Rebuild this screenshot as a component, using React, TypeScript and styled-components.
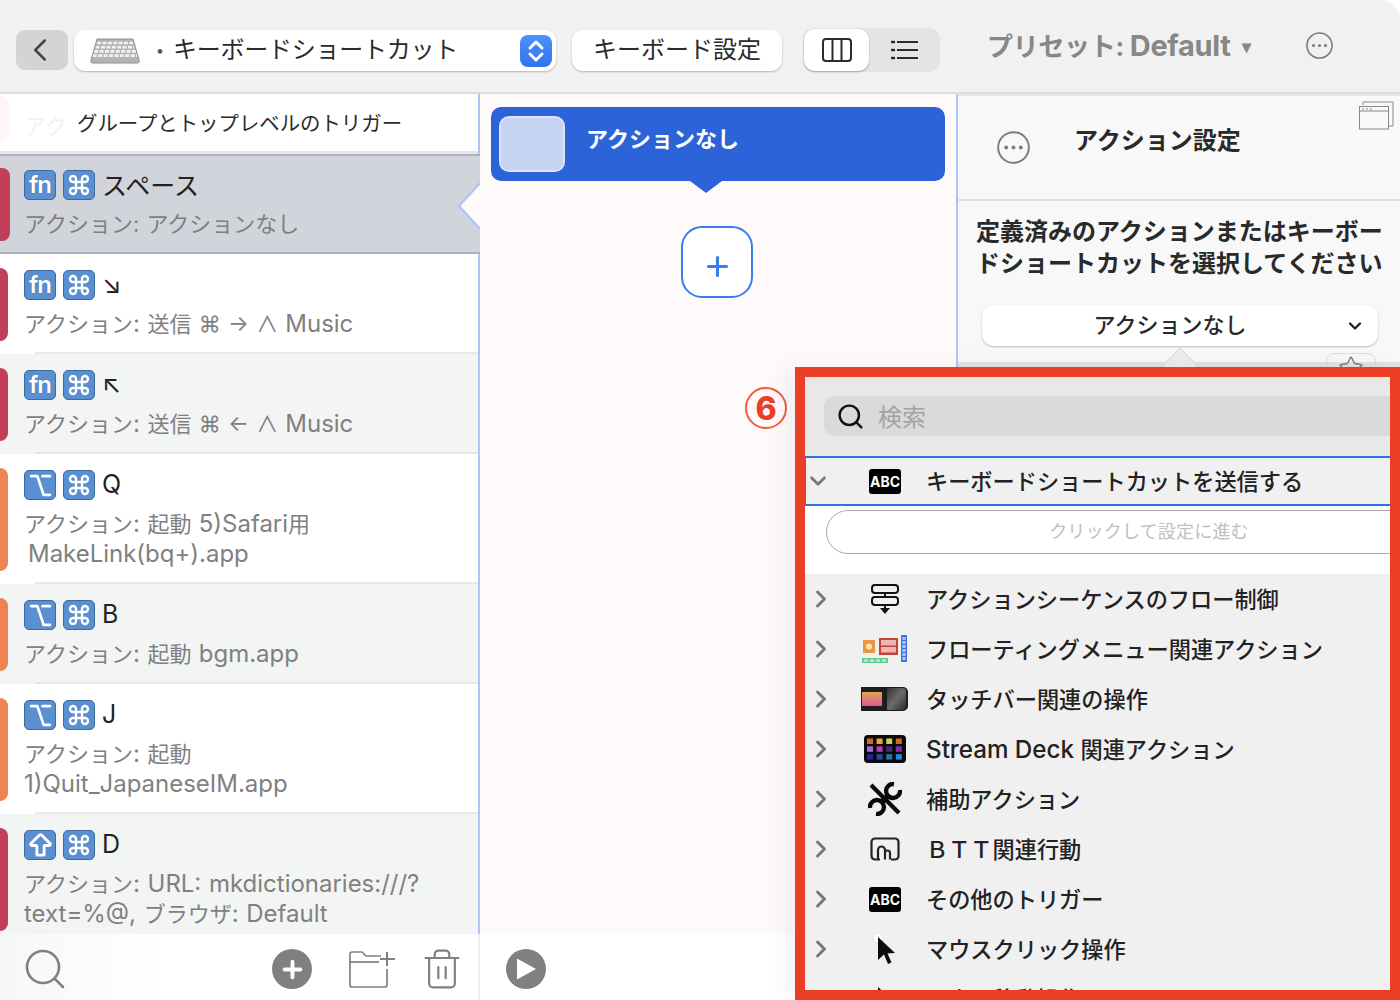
import {FC, ReactNode} from "react";
import styled, {createGlobalStyle} from "styled-components";
import {ArrowBigUp, ChevronDown, ChevronLeft, ChevronRight, Command, Option, Plus, Search, Star, Trash2} from "lucide-react";

const GlobalStyle = createGlobalStyle`
  html, body {
    margin: 0;
    padding: 0;
    background: #fff;
  }

  body {
    font-family: Inter, "Noto Sans CJK JP", sans-serif;
    color: #222;
  }
`;

interface TriggerEntity {
    stripe: string;
    keys: string[];
    label: ReactNode;
    lines: string[];
    indent?: boolean;
}

const RED = '#c13f58';
const ORANGE = '#ee8452';

const triggers: TriggerEntity[] = [
    {stripe: RED, keys: ['fn', 'cmd'], label: '↘', lines: ['アクション: 送信 ⌘ → ∧ Music']},
    {stripe: RED, keys: ['fn', 'cmd'], label: '↖', lines: ['アクション: 送信 ⌘ ← ∧ Music']},
    {stripe: ORANGE, keys: ['opt', 'cmd'], label: 'Q', lines: ['アクション: 起動 5)Safari用', 'MakeLink(bq+).app'], indent: true},
    {stripe: ORANGE, keys: ['opt', 'cmd'], label: 'B', lines: ['アクション: 起動 bgm.app']},
    {stripe: ORANGE, keys: ['opt', 'cmd'], label: 'J', lines: ['アクション: 起動', '1)Quit_JapaneseIM.app']},
    {stripe: RED, keys: ['shift', 'cmd'], label: 'D', lines: ['アクション: URL: mkdictionaries:///?', 'text=%@, ブラウザ: Default']},
];

const Latin = styled.span`
  font-size: 1.09em;
`;

// The system font of the original draws latin letters larger than its kana
const mixed = (text: string) => text.split(/([\x21-\x7e][\x20-\x7e]*)/).map((part, i) => (
    i % 2 === 1 ? <Latin key={i}>{part}</Latin> : part
));

const KeyBadge: FC<{name: string}> = ({name}) => {
    if (name === 'fn') {
        return <Key><FnText>fn</FnText></Key>;
    }
    if (name === 'opt') {
        return <Key><Option size={25} strokeWidth={2.6} color="#fff" /></Key>;
    }
    if (name === 'shift') {
        return <Key><ArrowBigUp size={29} strokeWidth={2.4} color="#fff" /></Key>;
    }
    return <Key><Command size={24} strokeWidth={2.4} color="#fff" /></Key>;
};

const TriggerRow: FC<{item: TriggerEntity; index: number}> = ({item, index}) => (
    <Row $alt={index % 2 === 1}>
        <Stripe $color={item.stripe} />
        <RowBody>
            <KeyLine>
                {item.keys.map((k, i) => <KeyBadge key={i} name={k} />)}
                <KeyLabel>{item.label}</KeyLabel>
            </KeyLine>
            {item.lines.map((line, i) => (
                <SubLine key={i} $first={i === 0} $indent={!!item.indent && i === 1}>{mixed(line)}</SubLine>
            ))}
        </RowBody>
    </Row>
);

const DotsCircle: FC<{size: number}> = ({size}) => (
    <svg width={size} height={size} viewBox="0 0 34 34">
        <circle cx="17" cy="17" r="15.8" fill="none" stroke="#7c7c7c" strokeWidth="2" />
        <circle cx="9.5" cy="17" r="2" fill="#7c7c7c" />
        <circle cx="17" cy="17" r="2" fill="#7c7c7c" />
        <circle cx="24.5" cy="17" r="2" fill="#7c7c7c" />
    </svg>
);

const KeyboardIcon = () => (
    <svg width="50" height="26" viewBox="0 0 50 26">
        <path d="M7 1H43L49 22a2 2 0 0 1-2 3H3a2 2 0 0 1-2-3Z" fill="#b5b5b5" stroke="#8e8e8e" />
        {[0, 1, 2, 3].map(r => (
            <path key={r} d={`M${7 - r * 1.4} ${5 + r * 4.2}H${43 + r * 1.4}`} stroke="#f1f1f1" strokeWidth="2.6" strokeDasharray="4 1.4" />
        ))}
    </svg>
);

const StepperIcon = () => (
    <svg width="18" height="24" viewBox="0 0 18 24" fill="none" stroke="#fff" strokeWidth="3" strokeLinecap="round" strokeLinejoin="round">
        <path d="M3 9l6-6 6 6" />
        <path d="M3 15l6 6 6-6" />
    </svg>
);

const ColumnsIcon = () => (
    <svg width="30" height="24" viewBox="0 0 30 24" fill="none" stroke="#2b2b2b" strokeWidth="2">
        <rect x="1" y="1" width="28" height="22" rx="3" />
        <path d="M10.5 1v22M19.5 1v22" />
    </svg>
);

const ListIcon = () => (
    <svg width="28" height="22" viewBox="0 0 28 22" fill="none" stroke="#2b2b2b" strokeWidth="2">
        <path d="M6 3h21M6 11h21M6 19h21" />
        <path d="M1 3h2M1 11h2M1 19h2" strokeWidth="2.6" strokeLinecap="round" />
    </svg>
);

const WindowsIcon = () => (
    <svg width="35" height="29" viewBox="0 0 35 29" fill="none" stroke="#888" strokeWidth="1">
        <path d="M4 4V1h30v24h-4" />
        <rect x="0.5" y="5.5" width="29" height="22.5" fill="#f8f8f8" />
        <path d="M0.5 10h29" />
        <path d="M3 8h2M7 8h2M11 8h2" />
    </svg>
);

const FlowIcon = () => (
    <svg width="30" height="32" viewBox="0 0 30 32" fill="none" stroke="#111" strokeWidth="2">
        <rect x="2" y="2" width="26" height="8" rx="3" />
        <rect x="2" y="14" width="26" height="8" rx="3" />
        <path d="M15 10v4M15 22v3" />
        <path d="M10 25h10l-5 6Z" fill="#111" stroke="none" />
    </svg>
);

const FloatingIcon = () => (
    <svg width="48" height="32" viewBox="0 0 48 32">
        <rect x="2" y="7" width="12" height="13" fill="#f0953f" />
        <circle cx="8" cy="13.5" r="3" fill="#fbe3c8" />
        <rect x="18" y="5" width="19" height="17" fill="#c5413c" />
        <rect x="20" y="7" width="15" height="5.5" fill="#e9b7b4" />
        <rect x="20" y="14" width="15" height="5.5" fill="#e9b7b4" />
        <rect x="40" y="2" width="6" height="27" rx="1" fill="#3f6fdc" />
        <path d="M43 4v23" stroke="#a9c4f2" strokeWidth="3.4" strokeDasharray="3 1" />
        <rect x="1" y="25" width="26" height="5" fill="#62cf90" />
        <path d="M3 27.5h22" stroke="#cdeeda" strokeWidth="2" strokeDasharray="4 2" />
    </svg>
);

const TouchBarIcon = () => (
    <svg width="48" height="26" viewBox="0 0 48 26">
        <defs>
            <linearGradient id="tbFill" x1="0" y1="0" x2="0" y2="1">
                <stop offset="0" stopColor="#e2a54a" />
                <stop offset="1" stopColor="#dc5aa0" />
            </linearGradient>
            <linearGradient id="tbKey" x1="0" y1="0" x2="1" y2="1">
                <stop offset="0" stopColor="#333" />
                <stop offset="0.5" stopColor="#6c6c6c" />
                <stop offset="1" stopColor="#2a2a2a" />
            </linearGradient>
        </defs>
        <path d="M0 1H42a5 5 0 0 1 5 5V20a5 5 0 0 1-5 5H0Z" fill="#1d1d1d" />
        <rect x="1" y="6" width="20" height="14" fill="url(#tbFill)" />
        <path d="M26 2H41a4 4 0 0 1 4 4V20a4 4 0 0 1-4 4H26Z" fill="url(#tbKey)" />
    </svg>
);

const deckColors = ['#d7662a', '#e0a838', '#c9d24a', '#d06a28', '#a868d8', '#b83cb0', '#4a2a78', '#8a28a8', '#2a1fa8', '#2848a8', '#2f6ea8', '#2f80e8'];

const StreamDeckIcon = () => (
    <svg width="42" height="28" viewBox="0 0 42 28">
        <rect width="42" height="28" rx="4" fill="#0a0a0a" />
        {deckColors.map((c, i) => (
            <rect key={i} x={3 + (i % 4) * 9.6} y={3.5 + Math.floor(i / 4) * 7.8} width="6" height="5.5" fill={c} />
        ))}
    </svg>
);

const ToolsIcon = () => (
    <svg width="34" height="34" viewBox="0 0 34 34" fill="none" stroke="#0a0a0a">
        <path d="M3 3L31 31" strokeWidth="4.2" />
        <path d="M20 14L14 20" strokeWidth="5.5" />
        <path d="M26 2A7 7 0 1 0 32 8" strokeWidth="4.4" />
        <path d="M8 32A7 7 0 1 0 2 26" strokeWidth="4.4" />
    </svg>
);

const BttIcon = () => (
    <svg width="30" height="24" viewBox="0 0 30 24" fill="none" stroke="#222" strokeWidth="2.2">
        <path d="M10 22.5H5a3.5 3.5 0 0 1-3.5-3.5V5A3.5 3.5 0 0 1 5 1.5H25A3.5 3.5 0 0 1 28.5 5V19a3.5 3.5 0 0 1-3.5 3.5H21" />
        <path d="M8 22.5V13a3.5 3.5 0 0 1 7 0v9.5M15 16a2.5 2.5 0 0 1 5 0v6.5" />
    </svg>
);

const CursorIcon: FC<{dot?: boolean}> = ({dot}) => (
    <svg width="26" height="32" viewBox="0 0 26 32">
        {dot && <circle cx="6" cy="5" r="5" fill="#fff" stroke="#ccc" strokeWidth="0.5" />}
        <path d="M6 4L23 20l-7.5 .5 4 9-3.5 1.5-4-9.5L6 27Z" fill="#0c0c0c" />
    </svg>
);

const AbcBadge = styled.div`
  width: 32px;
  height: 25px;
  display: flex;
  align-items: center;
  justify-content: center;
  border-radius: 3px;
  background: #000;
  font-size: 14px;
  font-weight: 700;
  color: #fff;
`;

const actions: {icon: ReactNode; title: string}[] = [
    {icon: <FlowIcon />, title: 'アクションシーケンスのフロー制御'},
    {icon: <FloatingIcon />, title: 'フローティングメニュー関連アクション'},
    {icon: <TouchBarIcon />, title: 'タッチバー関連の操作'},
    {icon: <StreamDeckIcon />, title: 'Stream Deck 関連アクション'},
    {icon: <ToolsIcon />, title: '補助アクション'},
    {icon: <BttIcon />, title: 'ＢＴＴ関連行動'},
    {icon: <AbcBadge>ABC</AbcBadge>, title: 'その他のトリガー'},
    {icon: <CursorIcon dot />, title: 'マウスクリック操作'},
    {icon: <CursorIcon />, title: 'マウス移動操作'},
];

export default function App() {
    return (
        <Shell>
            <GlobalStyle />
            <Toolbar>
                <BackButton><ChevronLeft size={38} strokeWidth={1.6} color="#444" /></BackButton>
                <GroupSelect>
                    <KeyboardIcon />
                    <GroupDot>・</GroupDot>
                    <GroupTitle>キーボードショートカット</GroupTitle>
                    <Stepper><StepperIcon /></Stepper>
                </GroupSelect>
                <ToolButton>キーボード設定</ToolButton>
                <Segmented>
                    <Segment $active><ColumnsIcon /></Segment>
                    <Segment><ListIcon /></Segment>
                </Segmented>
                <Preset>プリセット: <PresetName>Default</PresetName><PresetArrow>▾</PresetArrow></Preset>
                <PresetMenu><DotsCircle size={27} /></PresetMenu>
            </Toolbar>
            <Main>
                <LeftColumn>
                    <TriggerList>
                        <ListHeader>
                            <Ghost>アク</Ghost>
                            <HeaderTitle>グループとトップレベルのトリガー</HeaderTitle>
                        </ListHeader>
                        <SelectedRow>
                            <Stripe $color={RED} $wide />
                            <RowBody>
                                <KeyLine>
                                    <KeyBadge name="fn" />
                                    <KeyBadge name="cmd" />
                                    <KeyLabel>スペース</KeyLabel>
                                </KeyLine>
                                <SubLine $first>アクション: アクションなし</SubLine>
                            </RowBody>
                            <Notch width="24" height="50" viewBox="0 0 24 50">
                                <path d="M24 2L3 25l21 23Z" fill="#fefaf9" />
                                <path d="M24 2L3 25l21 23" fill="none" stroke="#adc6f5" strokeWidth="2.5" />
                            </Notch>
                        </SelectedRow>
                        {triggers.map((item, i) => <TriggerRow key={i} item={item} index={i} />)}
                    </TriggerList>
                    <BottomBar>
                        <Search size={48} strokeWidth={1.3} color="#808080" />
                        <BottomTools>
                            <RoundAction><Plus size={27} strokeWidth={3.4} color="#fff" /></RoundAction>
                            <FolderAdd width="47" height="40" viewBox="0 0 47 40" fill="none" stroke="#808080" strokeWidth="1.7">
                                <path d="M38 20V36a2 2 0 0 1-2 2H3a2 2 0 0 1-2-2V5a2 2 0 0 1 2-2H13l4 4H32" />
                                <path d="M1 13H30" />
                                <path d="M38 3V17M31 10H46" strokeWidth="2" />
                            </FolderAdd>
                            <Trash2 size={44} strokeWidth={1.2} color="#808080" />
                        </BottomTools>
                    </BottomBar>
                </LeftColumn>
                <MiddleColumn>
                    <SequencePane>
                        <ActionCard>
                            <Swatch />
                            <ActionCardTitle>アクションなし</ActionCardTitle>
                        </ActionCard>
                        <AddAction><Plus size={31} strokeWidth={2.4} color="#3a7bf0" /></AddAction>
                    </SequencePane>
                    <PlayBar>
                        <RoundAction>
                            <svg width="22" height="24" viewBox="0 0 22 24"><path d="M2 1.5L21 12 2 22.5Z" fill="#fff" /></svg>
                        </RoundAction>
                    </PlayBar>
                </MiddleColumn>
                <RightColumn>
                    <SettingsHeader>
                        <DotsCircle size={33} />
                        <SettingsTitle>アクション設定</SettingsTitle>
                        <WindowsSlot><WindowsIcon /></WindowsSlot>
                    </SettingsHeader>
                    <SettingsBody>
                        <Prompt>定義済みのアクションまたはキーボー<br />ドショートカットを選択してください</Prompt>
                        <ActionDropdown>
                            <span>アクションなし</span>
                            <DropdownChevron><ChevronDown size={20} strokeWidth={2.8} color="#222" /></DropdownChevron>
                        </ActionDropdown>
                        <PopoverEdge>
                            <PopoverTip width="38" height="21" viewBox="0 0 38 21">
                                <path d="M0 21L19 1l19 20Z" fill="#ededeb" stroke="#d2d2d0" />
                            </PopoverTip>
                            <StarBox><Star size={26} strokeWidth={1.3} color="#777" /></StarBox>
                        </PopoverEdge>
                    </SettingsBody>
                </RightColumn>
            </Main>
            <PickerFrame>
                <StepMark>6</StepMark>
                <Picker>
                    <SearchArea>
                        <SearchField>
                            <Search size={29} strokeWidth={2} color="#111" />
                            <SearchHint>検索</SearchHint>
                        </SearchField>
                    </SearchArea>
                    <OpenRow>
                        <RowChevron $open><ChevronDown size={26} strokeWidth={2.5} color="#777" /></RowChevron>
                        <RowIcon><AbcBadge>ABC</AbcBadge></RowIcon>
                        <RowTitle>キーボードショートカットを送信する</RowTitle>
                    </OpenRow>
                    <OpenDetail>
                        <ShortcutField>クリックして設定に進む</ShortcutField>
                    </OpenDetail>
                    {actions.map((a, i) => (
                        <ActionRow key={i}>
                            <RowChevron><ChevronRight size={28} strokeWidth={2.5} color="#777" /></RowChevron>
                            <RowIcon>{a.icon}</RowIcon>
                            <RowTitle>{mixed(a.title)}</RowTitle>
                        </ActionRow>
                    ))}
                </Picker>
            </PickerFrame>
        </Shell>
    );
}

const Shell = styled.div`
  position: relative;
  width: 1400px;
  height: 1000px;
  overflow: hidden;
  display: flex;
  flex-direction: column;
  background: #fff;
`;

const Toolbar = styled.div`
  box-sizing: border-box;
  height: 94px;
  flex: none;
  display: flex;
  align-items: flex-start;
  padding: 30px 0 0 16px;
  background: #f0f1f0;
  border-bottom: 2px solid #dcdcdc;
  border-top-right-radius: 20px;
`;

const BackButton = styled.div`
  box-sizing: border-box;
  width: 52px;
  height: 40px;
  flex: none;
  display: flex;
  align-items: center;
  justify-content: center;
  padding-right: 4px;
  margin-right: 6px;
  border-radius: 9px;
  background: #d4d5d3;
`;

const GroupSelect = styled.div`
  box-sizing: border-box;
  width: 482px;
  height: 41px;
  flex: none;
  display: flex;
  align-items: center;
  padding: 0 4px 0 16px;
  margin-right: 16px;
  border-radius: 11px;
  background: #fff;
  box-shadow: 0 1px 2px rgba(0, 0, 0, .25);
`;

const GroupDot = styled.span`
  width: 24px;
  margin: -4px 0 0 9px;
  font-size: 22px;
  color: #555;
`;

const GroupTitle = styled.span`
  flex: 1;
  margin-top: -7px;
  font-size: 24px;
  letter-spacing: -.25px;
  white-space: nowrap;
  color: #2a2a2a;
`;

const Stepper = styled.div`
  width: 32px;
  height: 32px;
  flex: none;
  display: flex;
  align-items: center;
  justify-content: center;
  border-radius: 8px;
  background: linear-gradient(#4b90fb, #2f74ee);
`;

const ToolButton = styled.div`
  box-sizing: border-box;
  width: 210px;
  height: 41px;
  flex: none;
  margin-right: 21px;
  padding-bottom: 6px;
  display: flex;
  align-items: center;
  justify-content: center;
  font-size: 24px;
  color: #2a2a2a;
  border-radius: 11px;
  background: #fff;
  box-shadow: 0 1px 2px rgba(0, 0, 0, .25);
`;

const Segmented = styled.div`
  width: 137px;
  height: 44px;
  flex: none;
  display: flex;
  margin: -2px 47px 0 0;
  border-radius: 11px;
  background: #e3e4e3;
`;

const Segment = styled.div<{$active?: boolean}>`
  flex: ${p => p.$active ? '0 0 65px' : '1'};
  display: flex;
  align-items: center;
  justify-content: center;
  border-radius: 11px;
  margin: 1px 0 1px 1px;
  background: ${p => p.$active ? '#fff' : 'transparent'};
  box-shadow: ${p => p.$active ? '0 1px 2px rgba(0, 0, 0, .3)' : 'none'};
`;

const Preset = styled.div`
  width: 320px;
  flex: none;
  height: 34px;
  margin-top: -1px;
  line-height: 34px;
  font-size: 26px;
  font-weight: 700;
  letter-spacing: -.3px;
  color: #878787;
  white-space: nowrap;
`;

const PresetName = styled.span`
  font-size: 29px;
`;

const PresetArrow = styled.span`
  margin-left: 11px;
  font-size: 18px;
  vertical-align: 3px;
`;

const PresetMenu = styled.div`
  margin: 2px 0 0 -1px;
  line-height: 0;
`;

const Main = styled.div`
  flex: 1;
  min-height: 0;
  display: flex;
`;

const LeftColumn = styled.div`
  width: 480px;
  flex: none;
  display: flex;
  flex-direction: column;
`;

const TriggerList = styled.div`
  position: relative;
  flex: 1;
  min-height: 0;
  overflow: hidden;

  &::after {
    content: "";
    position: absolute;
    right: 0;
    top: 0;
    bottom: 0;
    width: 2px;
    background: #adc6f5;
  }
`;

const ListHeader = styled.div`
  position: relative;
  box-sizing: border-box;
  height: 60px;
  padding: 18px 0 0 77px;
  background: #fff;
  border-bottom: 3px solid #e6e6e6;
  box-shadow: inset 0 -4px 0 #fff;
  overflow: hidden;

  &::before {
    content: "";
    position: absolute;
    left: 0;
    top: 2px;
    width: 9px;
    height: 44px;
    border-radius: 0 8px 8px 0;
    background: #fef6f4;
  }
`;

const Ghost = styled.div`
  position: absolute;
  left: 24px;
  top: 14px;
  font-size: 22px;
  white-space: nowrap;
  color: #f5f1f0;
`;

const HeaderTitle = styled.div`
  position: relative;
  font-size: 20.4px;
  line-height: 24px;
  color: #2a2a2a;
`;

const Row = styled.div<{$alt?: boolean}>`
  box-sizing: border-box;
  display: flex;
  background: ${p => p.$alt ? '#f3f4f4' : '#fff'};
  border-bottom: 2px solid #e8e8e8;
  border-image: linear-gradient(90deg, transparent 36px, #e8e8e8 36px) 1;
`;

const SelectedRow = styled(Row)`
  position: relative;
  z-index: 1;
  background: #d1d5db;
  border-image: none;
  border-bottom: 2px solid #aab2bf;
  box-shadow: inset 0 2px 0 #aab2bf;
`;

const Notch = styled.svg`
  position: absolute;
  right: 0;
  top: 27px;
`;

const Stripe = styled.div<{$color: string; $wide?: boolean}>`
  width: ${p => p.$wide ? 10 : 8}px;
  flex: none;
  margin: 14px ${p => p.$wide ? -2 : 0}px 11px 0;
  border-radius: 0 8px 8px 0;
  background: ${p => p.$color};
`;

const RowBody = styled.div`
  flex: 1;
  min-width: 0;
  padding: 16px 0 13px 16px;
`;

const KeyLine = styled.div`
  height: 30px;
  display: flex;
  align-items: center;
  gap: 7px;
`;

const Key = styled.div`
  box-sizing: border-box;
  width: 32px;
  height: 30px;
  display: flex;
  align-items: center;
  justify-content: center;
  border: 1px solid #3f6a9e;
  border-radius: 5px;
  background: #5a8fd1;
`;

const FnText = styled.span`
  font-size: 24px;
  line-height: 24px;
  font-weight: 600;
  letter-spacing: -1px;
  color: #fff;
  text-shadow: 0 0 1px #2c5a96;
`;

const KeyLabel = styled.span`
  margin-top: -3px;
  font-size: 25px;
  color: #222;
`;

const SubLine = styled.div<{$first?: boolean; $indent?: boolean}>`
  margin-top: ${p => p.$first ? 9 : 0}px;
  padding-left: ${p => p.$indent ? 4 : 0}px;
  height: 30px;
  line-height: 30px;
  font-size: 22px;
  white-space: nowrap;
  color: #808080;
  word-spacing: 1px;
`;

const BottomBar = styled.div`
  box-sizing: border-box;
  height: 66px;
  flex: none;
  display: flex;
  align-items: center;
  justify-content: space-between;
  padding: 4px 14px 0 21px;
  background: linear-gradient(90deg, #f6f7f7, #fff 35%);
  border-right: 2px solid #eeeeee;
`;

const BottomTools = styled.div`
  display: flex;
  align-items: center;
`;

const FolderAdd = styled.svg`
  margin: 0 24px 0 37px;
`;

const RoundAction = styled.div`
  width: 40px;
  height: 40px;
  display: flex;
  align-items: center;
  justify-content: center;
  border-radius: 50%;
  background: #808080;
`;

const MiddleColumn = styled.div`
  width: 478px;
  flex: none;
  display: flex;
  flex-direction: column;
`;

const SequencePane = styled.div`
  flex: 1;
  min-height: 0;
  display: flex;
  flex-direction: column;
  align-items: flex-start;
  padding: 13px 10px 0 11px;
  background: #fefaf9;
  border-right: 2px solid #adc6f5;
`;

const ActionCard = styled.div`
  position: relative;
  box-sizing: border-box;
  width: 454px;
  height: 74px;
  flex: none;
  display: flex;
  align-items: flex-start;
  padding: 9px 8px;
  border-radius: 10px;
  background: #2c63d9;

  &::after {
    content: "";
    position: absolute;
    left: 199px;
    top: 100%;
    border-style: solid;
    border-width: 12px 16px 0;
    border-color: #2c63d9 transparent transparent;
  }
`;

const Swatch = styled.div`
  box-sizing: border-box;
  width: 66px;
  height: 56px;
  flex: none;
  border: 2px solid #dbe4f8;
  border-radius: 10px;
  background: #c5d4f3;
`;

const ActionCardTitle = styled.div`
  margin: 9px 0 0 21px;
  line-height: 28px;
  font-size: 22px;
  font-weight: 700;
  color: #fff;
`;

const AddAction = styled.div`
  box-sizing: border-box;
  width: 72px;
  height: 72px;
  flex: none;
  display: flex;
  align-items: center;
  justify-content: center;
  padding: 9px 0 0 1px;
  margin: 45px 0 0 190px;
  border: 2px solid #3a7bf0;
  border-radius: 21px;
  background: #fff;
`;

const PlayBar = styled.div`
  box-sizing: border-box;
  height: 66px;
  flex: none;
  display: flex;
  align-items: center;
  padding: 4px 0 0 26px;
  background: #fff;
`;

const RightColumn = styled.div`
  flex: 1;
  min-width: 0;
  display: flex;
  flex-direction: column;
  background: #f8f8f8;
`;

const SettingsHeader = styled.div`
  position: relative;
  box-sizing: border-box;
  height: 107px;
  flex: none;
  display: flex;
  align-items: flex-start;
  padding: 35px 0 0 39px;
  border-top: 2px solid #e6e6e6;
  border-bottom: 2px solid #e2e2e2;
`;

const SettingsTitle = styled.div`
  margin: -5px 0 0 44px;
  line-height: 30px;
  font-size: 24px;
  font-weight: 700;
  color: #2a2a2a;
`;

const WindowsSlot = styled.div`
  position: absolute;
  right: 6px;
  top: 5px;
`;

const SettingsBody = styled.div`
  flex: 1;
  display: flex;
  flex-direction: column;
`;

const Prompt = styled.div`
  margin: 15px 0 0 18px;
  line-height: 32px;
  font-size: 24px;
  font-weight: 700;
  white-space: nowrap;
  color: #2a2a2a;
`;

const ActionDropdown = styled.div`
  position: relative;
  box-sizing: border-box;
  width: 396px;
  height: 41px;
  flex: none;
  display: flex;
  align-items: center;
  justify-content: center;
  padding: 0 20px 5px 0;
  margin: 25px 0 0 24px;
  font-size: 22px;
  font-weight: 500;
  color: #2a2a2a;
  border-radius: 12px;
  background: #fff;
  box-shadow: 0 1px 2px rgba(0, 0, 0, .25);
`;

const DropdownChevron = styled.div`
  position: absolute;
  right: 13px;
  top: 11px;
  line-height: 0;
`;

const PopoverEdge = styled.div`
  position: relative;
  flex: 1;
  margin-top: 16px;
  background: #e2e2e2;
`;

const PopoverTip = styled.svg`
  position: absolute;
  left: 203px;
  top: -15px;
`;

const StarBox = styled.div`
  position: absolute;
  left: 368px;
  top: -9px;
  box-sizing: border-box;
  width: 50px;
  height: 40px;
  display: flex;
  justify-content: center;
  padding-top: 1px;
  border: 1px solid #dcdcdc;
  border-radius: 8px;
`;

const PickerFrame = styled.div`
  position: absolute;
  left: 795px;
  top: 367px;
  right: 0;
  bottom: 0;
  box-sizing: border-box;
  border: 10px solid #ea3f26;
  box-shadow: -10px 0 24px rgba(0, 0, 0, .05);
`;

const StepMark = styled.div`
  position: absolute;
  left: -60px;
  top: 10px;
  box-sizing: border-box;
  width: 42px;
  height: 42px;
  display: flex;
  align-items: center;
  justify-content: center;
  border: 2px solid #ee5a44;
  border-radius: 50%;
  font-size: 32px;
  font-weight: 800;
  color: #ea3f26;
`;

const Picker = styled.div`
  height: 100%;
  overflow: hidden;
  background: #f0f0f0;
`;

const SearchArea = styled.div`
  box-sizing: border-box;
  height: 79px;
  padding: 19px 0 0 19px;
  background: #e8e8e6;
`;

const SearchField = styled.div`
  box-sizing: border-box;
  height: 40px;
  display: flex;
  align-items: center;
  gap: 13px;
  padding-left: 12px;
  margin-right: -12px;
  border-radius: 10px 0 0 10px;
  background: #dadad8;
`;

const SearchHint = styled.span`
  margin-top: -2px;
  font-size: 24px;
  color: #a3a3a3;
`;

const OpenRow = styled.div`
  box-sizing: border-box;
  height: 50px;
  display: flex;
  align-items: center;
  border-top: 2px solid #2f72e6;
  border-bottom: 2px solid #2f72e6;
  box-shadow: inset 1px 0 0 #2f72e6;
`;

const OpenDetail = styled.div`
  box-sizing: border-box;
  height: 68px;
  padding: 4px 0 0 21px;
  background: #fff;
`;

const ShortcutField = styled.div`
  box-sizing: border-box;
  width: 646px;
  height: 44px;
  line-height: 42px;
  text-align: center;
  font-size: 18px;
  letter-spacing: .2px;
  border: 1px solid #aaaaaa;
  border-radius: 22px;
  color: #c0c0c0;
`;

const ActionRow = styled.div`
  height: 50px;
  display: flex;
  align-items: center;
`;

const RowChevron = styled.div<{$open?: boolean}>`
  box-sizing: border-box;
  width: 32px;
  flex: none;
  display: flex;
  justify-content: center;
  padding-right: ${p => p.$open ? 6 : 0}px;
  line-height: 0;
`;

const RowIcon = styled.div`
  width: 96px;
  flex: none;
  display: flex;
  justify-content: center;
`;

const RowTitle = styled.div`
  margin: -3px 0 0 -7px;
  font-size: 22.2px;
  font-weight: 500;
  white-space: pre;
  color: #222;
`;
